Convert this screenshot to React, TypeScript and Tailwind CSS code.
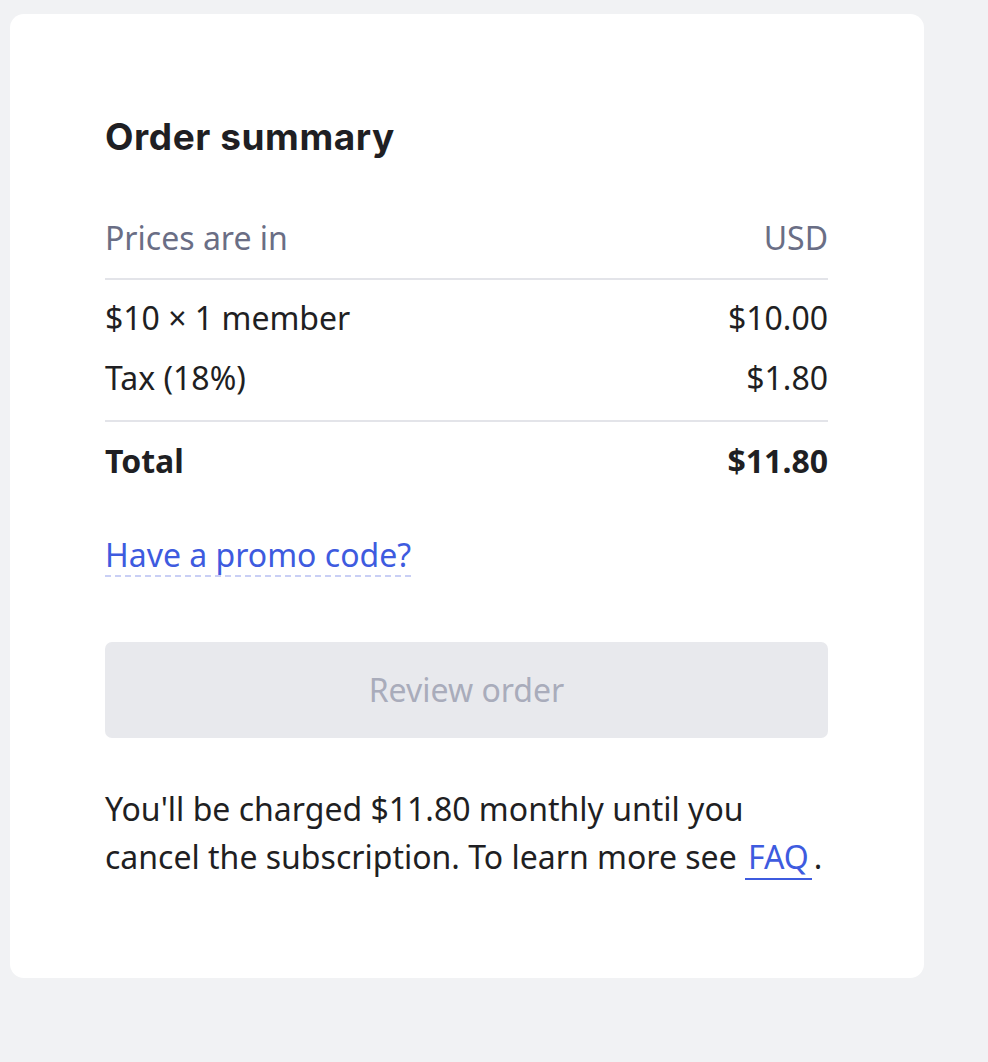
export default function App() {
  return (
    <div className="min-h-screen bg-[#f1f2f4] pt-[14px] pl-[10px]">
      <div
        className="w-[914px] h-[964px] bg-white rounded-[14px] pl-[95px] pr-[96px] pt-[103px] text-[#1f1f23]"
        style={{ fontFamily: '"Noto Sans", "Open Sans", sans-serif' }}
      >
        <h1
          className="text-[37px] font-bold leading-[40px] tracking-[0.015em]"
          style={{ fontFamily: 'Inter, "Noto Sans", sans-serif' }}
        >
          Order summary
        </h1>

        <div className="mt-[57px] text-[32px] leading-[48px]">
          <div className="flex justify-between pb-[16px] text-[#6a6e85]">
            <span>Prices are in</span>
            <span>USD</span>
          </div>
          <div className="border-t-2 border-[#e3e4e9]" />
          <div className="flex justify-between mt-[14px]">
            <span>$10 × 1 member</span>
            <span>$10.00</span>
          </div>
          <div className="flex justify-between mt-[12px]">
            <span>Tax (18%)</span>
            <span>$1.80</span>
          </div>
          <div className="mt-[18px] border-t-2 border-[#e3e4e9]" />
          <div className="flex justify-between mt-[15px] font-bold">
            <span>Total</span>
            <span>$11.80</span>
          </div>
        </div>

        <div className="mt-[50px] flex">
          <button className="text-[32px] leading-[40px] text-[#3e5bdf] border-b-2 border-dashed border-[#c9cff5]">
            Have a promo code?
          </button>
        </div>

        <button
          disabled
          className="mt-[65px] w-full h-[96px] rounded-[7px] bg-[#e8e9ed] text-[#a9acbb] text-[32px]"
        >
          Review order
        </button>

        <p className="mt-[47px] text-[32px] leading-[48px]">
          You'll be charged $11.80 monthly until you cancel the subscription. To learn more see{' '}
          <a className="text-[#3e5bdf] border-b-2 border-[#3e5bdf] px-[3px] mr-[2px]">FAQ</a>.
        </p>
      </div>
    </div>
  );
}
